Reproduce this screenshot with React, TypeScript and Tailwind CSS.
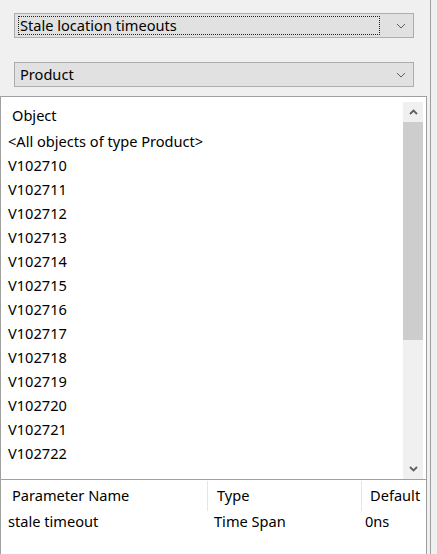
import React from 'react'

const items = [
  '<All objects of type Product>',
  'V102710',
  'V102711',
  'V102712',
  'V102713',
  'V102714',
  'V102715',
  'V102716',
  'V102717',
  'V102718',
  'V102719',
  'V102720',
  'V102721',
  'V102722',
]

function Chevron({ up = false, className = '' }: { up?: boolean; className?: string }) {
  return (
    <svg width="10" height="6" viewBox="0 0 10 6" fill="none" className={className}>
      <path
        d={up ? 'M1 5l4-4 4 4' : 'M1 1l4 4 4-4'}
        stroke="currentColor"
        strokeWidth="1"
      />
    </svg>
  )
}

function ScrollArrow({ up = false }: { up?: boolean }) {
  return (
    <svg width="9" height="6" viewBox="0 0 9 6" fill="none">
      <path d={up ? 'M1 5l3.5-3.5L8 5' : 'M1 1l3.5 3.5L8 1'} stroke="#606060" strokeWidth="1.8" />
    </svg>
  )
}

function Combo({ label, focused = false }: { label: string; focused?: boolean }) {
  return (
    <div className="h-[25px] border border-[#adadad] bg-[#e1e1e1] flex items-center pl-[3px] pr-[7px]">
      <div
        className={`flex-1 h-[19px] flex items-center pl-[1px] ${
          focused ? 'border border-dotted border-[#222]' : 'border border-transparent'
        }`}
      >
        {label}
      </div>
      <div className="w-[26px] flex justify-end text-[#606060]">
        <Chevron />
      </div>
    </div>
  )
}

export default function App() {
  return (
    <div className="w-[437px] h-[554px] bg-[#f0f0f0] flex text-[14.6px] text-black font-['Noto_Sans',sans-serif] overflow-hidden">
      <div className="w-[427px] flex flex-col">
        {/* combos */}
        <div className="pt-[13px] px-[14px] flex flex-col gap-[24px] w-[428px]">
          <Combo label="Stale location timeouts" focused />
          <Combo label="Product" />
        </div>

        {/* object list */}
        <div className="mt-[9px] h-[384px] border border-[#a0a0a0] bg-white flex">
          <div className="flex-1 flex flex-col">
            <div className="h-[33px] pt-[4px] pl-[11px] flex items-center shrink-0">Object</div>
            {items.map(it => (
              <div key={it} className="h-[24px] pl-[7px] flex items-center shrink-0">
                {it}
              </div>
            ))}
          </div>
          <div className="w-[20px] mr-[3px] mt-[5px] bg-[#f0f0f0] flex flex-col">
            <div className="h-[20px] flex items-center justify-center">
              <ScrollArrow up />
            </div>
            <div className="h-[218px] bg-[#cdcdcd]" />
            <div className="flex-1" />
            <div className="h-[20px] flex items-center justify-center">
              <ScrollArrow />
            </div>
          </div>
        </div>

        {/* parameters */}
        <div className="flex-1 border-x border-[#a0a0a0] bg-white">
          <div className="h-[30px] flex items-center mt-[1px]">
            <div className="w-[207px] h-full pl-[11px] flex items-center border-r border-[#e5e5e5]">
              Parameter Name
            </div>
            <div className="w-[154px] h-full pl-[9px] flex items-center border-r border-[#e5e5e5]">Type</div>
            <div className="flex-1 pl-[8px] flex items-center">Default</div>
          </div>
          <div className="h-[22px] flex items-center">
            <div className="w-[207px] pl-[7px]">stale timeout</div>
            <div className="w-[154px] pl-[6px]">Time Span</div>
            <div className="flex-1 pl-[3px]">0ns</div>
          </div>
        </div>
      </div>
      <div className="w-[3px]" />
      <div className="w-[1px] bg-[#a0a0a0]" />
      <div className="flex-1" />
    </div>
  )
}
